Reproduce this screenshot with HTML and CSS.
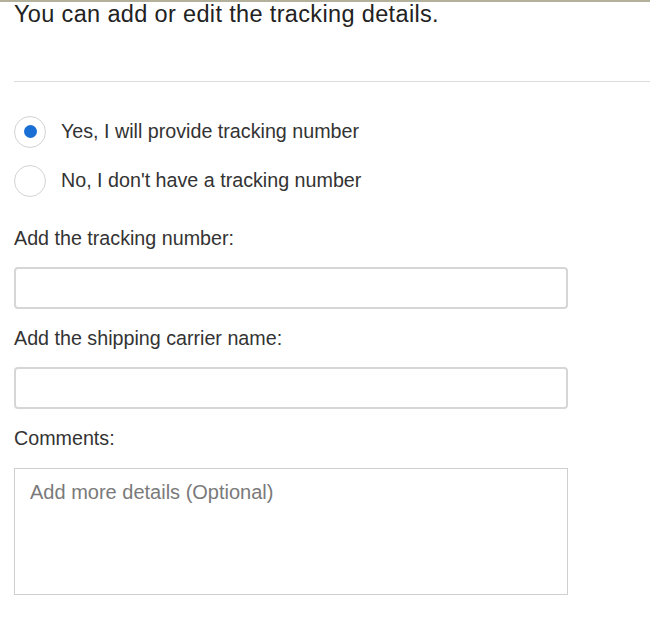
FILE: index.html
```html
<!DOCTYPE html>
<html lang="en">
<head>
<meta charset="utf-8">
<title>Tracking details</title>
<link rel="stylesheet" href="styles.css">
</head>
<body>
<div class="page">
  <p class="intro">You can add or edit the tracking details.</p>
  <hr class="divider">
  <div class="radios">
    <label class="radio-row">
      <span class="radio checked"><span class="dot"></span></span>
      <span class="radio-text">Yes, I will provide tracking number</span>
    </label>
    <label class="radio-row">
      <span class="radio"></span>
      <span class="radio-text">No, I don't have a tracking number</span>
    </label>
  </div>
  <div class="fields">
    <div class="label">Add the tracking number:</div>
    <div class="input"></div>
    <div class="label">Add the shipping carrier name:</div>
    <div class="input"></div>
    <div class="label">Comments:</div>
    <div class="textarea"><span class="placeholder">Add more details (Optional)</span></div>
  </div>
</div>
</body>
</html>
```
FILE: styles.css
```css
html, body {
  margin: 0;
  padding: 0;
  background: #fff;
}
body {
  font-family: "Liberation Sans", Arial, sans-serif;
  color: #2b2b2b;
}
.page {
  border-top: 2px solid #b3b09c;
  padding-left: 14px;
}
.intro {
  margin: 0;
  padding-top: 1px;
  font-size: 23.5px;
  line-height: 22px;
  letter-spacing: 0.35px;
  color: #222;
}
.divider {
  margin: 56px 0 0 0;
  border: 0;
  border-top: 1px solid #dcdcdc;
  height: 0;
}
.radios {
  display: flex;
  flex-direction: column;
  gap: 16px;
  padding-top: 33px;
}
.radio-row {
  display: flex;
  align-items: center;
  gap: 15px;
  height: 33px;
}
.radio {
  width: 30px;
  height: 30px;
  border: 1.5px solid #d4d4d4;
  border-radius: 50%;
  display: flex;
  align-items: center;
  justify-content: center;
  flex: none;
}
.dot {
  width: 13px;
  height: 13px;
  border-radius: 50%;
  background: #1a6fd4;
}
.radio-text {
  font-size: 19.7px;
  color: #333;
}
.fields {
  display: flex;
  flex-direction: column;
  gap: 17px;
  padding-top: 29px;
}
.label {
  font-size: 19.7px;
  color: #333;
  line-height: 24px;
}
.input {
  width: 550px;
  height: 38px;
  border: 2px solid #d6d6d6;
  border-radius: 4px;
}
.textarea {
  width: 554px;
  height: 127px;
  margin-top: 1px;
  border: 1px solid #cfcfcf;
  padding: 11px 15px;
  box-sizing: border-box;
  line-height: 24px;
}
.placeholder {
  font-size: 20px;
  color: #7a7a7a;
}
```
